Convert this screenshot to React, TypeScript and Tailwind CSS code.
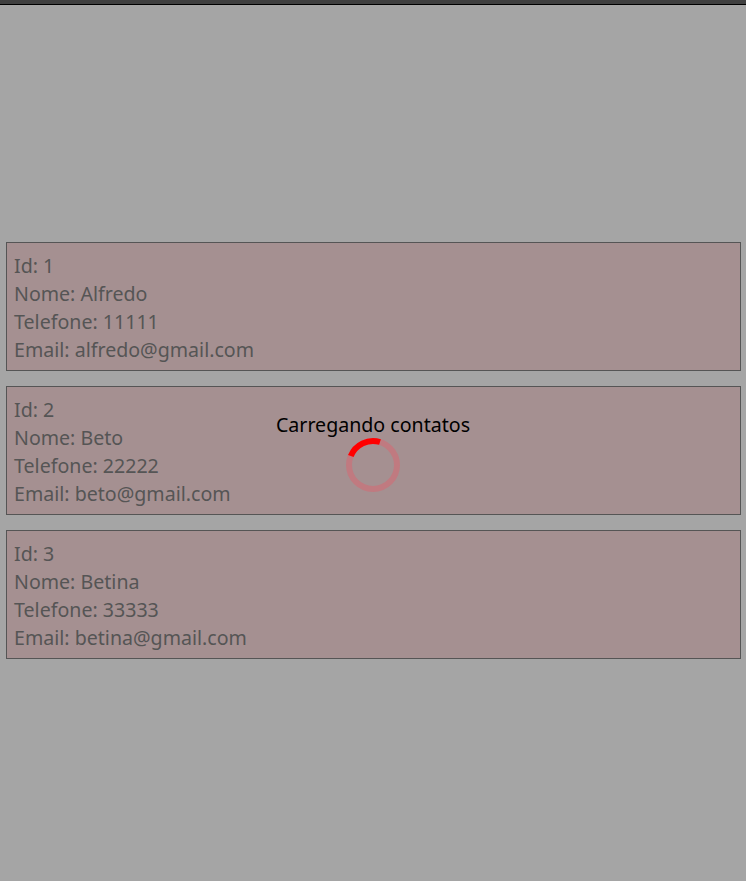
import React from "react";

const contacts = [
  { id: 1, nome: "Alfredo", tel: "11111", email: "alfredo@gmail.com" },
  { id: 2, nome: "Beto", tel: "22222", email: "beto@gmail.com" },
  { id: 3, nome: "Betina", tel: "33333", email: "betina@gmail.com" },
];

export default function App() {
  return (
    <div
      className="relative w-[746px] h-[881px] bg-[#a5a5a5] overflow-hidden"
      style={{ fontFamily: '"Noto Sans", "Open Sans", sans-serif' }}
    >
      <div className="h-[5px] bg-[#404040] border-b border-black" />
      <div className="flex flex-col gap-[15px] pl-[6px] pr-[5px] pt-[237px]">
        {contacts.map((c) => (
          <div
            key={c.id}
            className="border border-[#555555] bg-[#a59091] pl-[7px] pt-[9px] pb-[6px] text-[19.6px] leading-[28px] text-[#555555]"
          >
            <div>Id: {c.id}</div>
            <div>Nome: {c.nome}</div>
            <div>Telefone: {c.tel}</div>
            <div>Email: {c.email}</div>
          </div>
        ))}
      </div>
      <div className="absolute left-0 right-0 top-[411px] flex flex-col items-center">
        <div className="text-[19.6px] leading-[28px] text-black">Carregando contatos</div>
        <svg width="56" height="56" viewBox="0 0 56 56" className="-mt-[2px]">
          <circle cx="28" cy="28" r="24" fill="none" stroke="#c07a80" strokeWidth="6" />
          <path
            d="M 28 28 m -22.2 -9 A 24 24 0 0 1 35 5"
            fill="none"
            stroke="#ff0000"
            strokeWidth="6"
          />
        </svg>
      </div>
    </div>
  );
}
